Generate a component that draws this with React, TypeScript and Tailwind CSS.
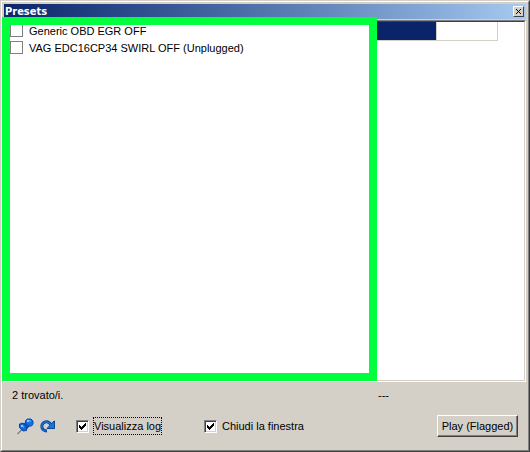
import { useState } from "react";

const presets = ["Generic OBD EGR OFF", "VAG EDC16CP34 SWIRL OFF (Unplugged)"];

function PinIcon() {
  return (
    <svg width="17" height="17" viewBox="0 0 17 17" aria-hidden="true">
      <path d="M0.5 16 L5 11.5" stroke="#777f8a" strokeWidth="1.2" />
      <path d="M5 6 L9 4 L13 8 L10 11 Z" fill="#0b4fb8" />
      <path d="M2.5 6 L6 5 L10 9 L9.5 12.5 L6 13 L2.5 9.5 Z" fill="#1268d8" stroke="#0845a0" />
      <path d="M8.5 2.5 L10.5 1 H14 L16 3 V6 L14.5 8 H11.5 L8.5 5 Z" fill="#1670e2" stroke="#0b4fb0" />
      <path d="M10 2h2v2h-2z M4 7h2v2h-2z" fill="#8cc8ff" />
      <path d="M12 2h2v2h-2z M6 8h1v2h-1z" fill="#3d9bfa" />
    </svg>
  );
}

function RedoIcon() {
  return (
    <svg width="15" height="13" viewBox="0 0 15 13" aria-hidden="true">
      <path d="M7 11 C4 11 1.8 9 1.8 6.2 C1.8 3.6 4 1.8 6.4 1.8 C8.6 1.8 10 3.2 11 5" fill="none" stroke="#0a4597" strokeWidth="3" />
      <path d="M14.5 1 V8.5 H7 L14 1 Z" fill="#1b74d6" stroke="#0a4597" strokeWidth="1" />
      <path d="M6.5 11 C4 11 1.8 9 1.8 6.2 C1.8 3.6 4 1.8 6.4 1.8 C8.6 1.8 10 3.2 11.2 5.4" fill="none" stroke="#1b74d6" strokeWidth="1.2" />
    </svg>
  );
}

function Check({ id, label, focused = false }: { id: string; label: string; focused?: boolean }) {
  const [checked, setChecked] = useState(true);
  return (
    <div className="flex items-center gap-1">
      <span className="relative h-[13px] w-[13px]">
        <input
          id={id}
          type="checkbox"
          checked={checked}
          onChange={(e) => setChecked(e.target.checked)}
          className="block h-[13px] w-[13px] appearance-none border border-t-[#808080] border-r-white border-b-white border-l-[#808080] bg-white shadow-[inset_1px_1px_0_#404040,inset_-1px_-1px_0_#d4d0c8]"
        />
        {checked && (
          <svg className="pointer-events-none absolute top-[3px] left-[3px]" width="7" height="7" viewBox="0 0 7 7" shapeRendering="crispEdges">
            <path d="M0 2h1v1h1v1h1v-1h1v-1h1v-1h1v-1h1v3h-1v1h-1v1h-1v1h-1v1h-1v-1h-1v-1h-1z" />
          </svg>
        )}
      </span>
      <label htmlFor={id} className={focused ? "border border-dotted border-black leading-4 whitespace-nowrap" : "border border-transparent leading-4 whitespace-nowrap"}>
        {label}
      </label>
    </div>
  );
}

export default function App() {
  return (
    <div className="flex min-h-screen flex-col border border-t-[#d4d0c8] border-r-[#404040] border-b-[#404040] border-l-[#d4d0c8] bg-[#d4d0c8] font-['Liberation_Sans',Arial,sans-serif] text-[11px] text-black">
      <div className="flex flex-1 flex-col border border-t-white border-r-[#808080] border-b-[#808080] border-l-white">
        <header className="mx-0.5 mt-0.5 flex h-[15px] items-center justify-between bg-linear-to-r from-[#0a246a] to-[#a6caf0] pr-0.5 pl-px">
          <h1 className="font-['DejaVu_Sans_Condensed','DejaVu_Sans',sans-serif] text-[11px] leading-4 font-bold text-white">Presets</h1>
          <button
            type="button"
            aria-label="Close"
            className="flex h-[11px] w-[11px] items-center justify-center border border-t-white border-r-[#404040] border-b-[#404040] border-l-white bg-[#d4d0c8]"
          >
            <svg width="7" height="5" viewBox="0 0 7 5" shapeRendering="crispEdges">
              <path d="M1 0h1v1h1v1h1v-1h1v-1h1v1h-1v1h-1v1h1v1h1v1h-1v-1h-1v-1h-1v1h-1v1h-1v-1h1v-1h1v-1h-1v-1h-1z" />
            </svg>
          </button>
        </header>

        <main className="mt-px mr-0.5 flex flex-1 border border-t-[#808080] border-r-white border-b-white border-l-[#808080]">
          <div className="flex flex-1 border border-t-[#404040] border-r-[#d4d0c8] border-b-[#d4d0c8] border-l-[#404040] bg-white">
            <div className="relative flex-[373]">
              <ul className="pl-1.5">
                {presets.map((name, i) => (
                  <li key={name} className="flex h-[17px] items-center gap-1.5">
                    <input id={`preset-${i}`} type="checkbox" className="h-[13px] w-[13px] appearance-none border border-[#808080] bg-white checked:bg-[#0a246a]" />
                    <label htmlFor={`preset-${i}`} className="leading-4 whitespace-nowrap">{name}</label>
                  </li>
                ))}
              </ul>
              {/* highlight frame around the list */}
              <div className="pointer-events-none absolute -top-[5px] right-0 -bottom-px -left-0.5 border-8 border-[#00ff3c]" />
            </div>
            <div className="flex-[147]">
              <div className="mr-[26px] flex h-[19px] border-b border-[#d4d0c8]">
                <div className="flex-[60] border-r border-[#d4d0c8] bg-[#0a246a]" />
                <div className="flex-[61] border-r border-[#d4d0c8]" />
              </div>
            </div>
          </div>
        </main>

        <footer className="pt-[5px] pr-2.5 pb-[13px] pl-2.5">
          <div className="flex leading-4">
            <p className="flex-[366]">2 trovato/i.</p>
            <p className="flex-[140]">---</p>
          </div>
          <div className="mt-3 flex items-center justify-between">
            <div className="flex items-center pl-[5px]">
              <button type="button" aria-label="Pin">
                <PinIcon />
              </button>
              <button type="button" aria-label="Reload" className="ml-1.5">
                <RedoIcon />
              </button>
              <div className="ml-[21px] w-32">
                <Check id="show-log" label="Visualizza log" focused />
              </div>
              <Check id="close-window" label="Chiudi la finestra" />
            </div>
            <button
              type="button"
              className="h-[22px] w-[81px] border border-t-white border-r-[#404040] border-b-[#404040] border-l-white leading-4 whitespace-nowrap shadow-[inset_-1px_-1px_0_#808080]"
            >
              Play (Flagged)
            </button>
          </div>
        </footer>
      </div>
    </div>
  );
}
